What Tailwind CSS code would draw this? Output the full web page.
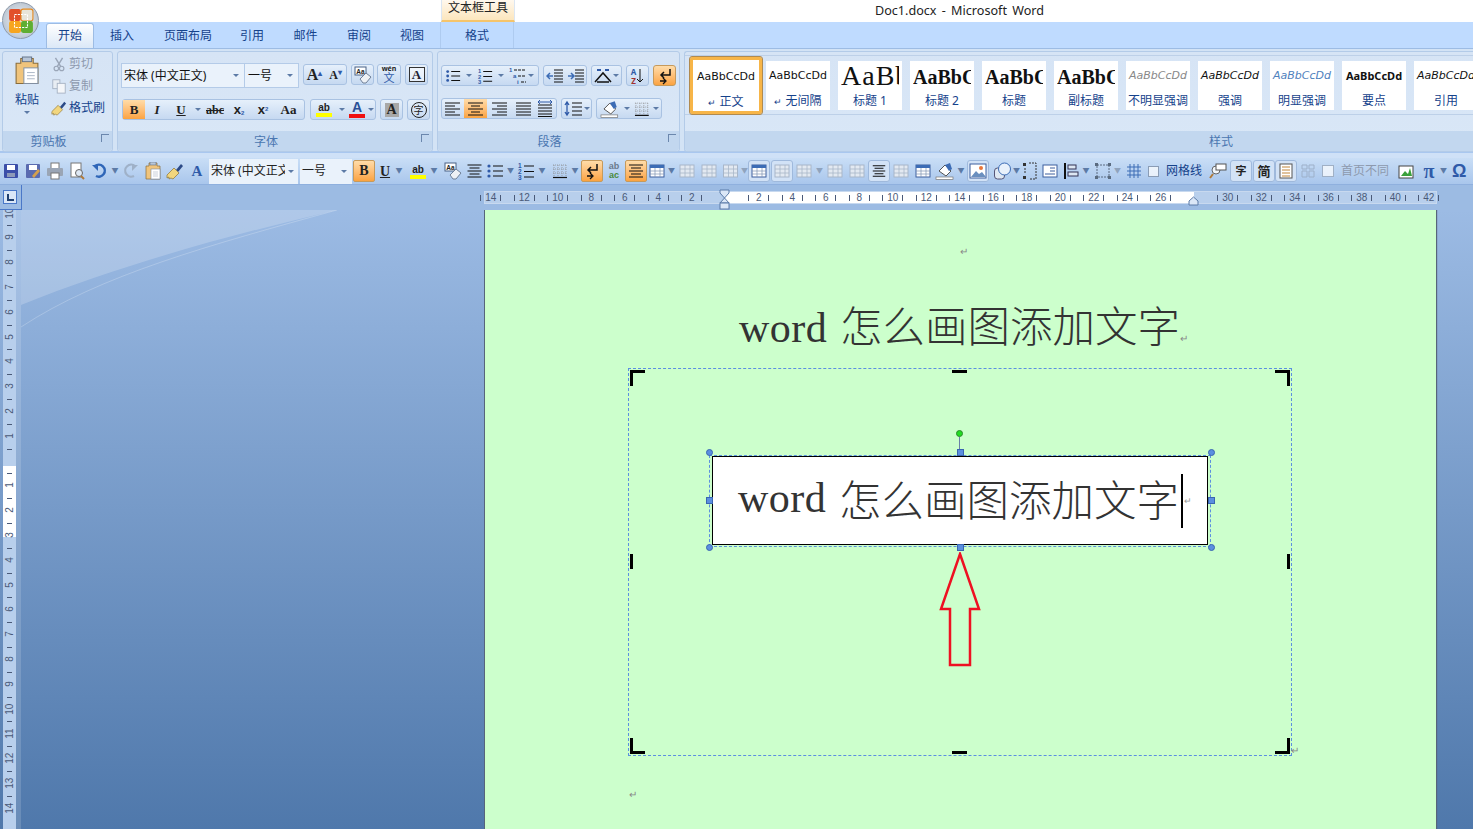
<!DOCTYPE html>
<html lang="zh"><head><meta charset="utf-8"><title>Doc1.docx - Microsoft Word</title>
<script src="https://cdn.jsdelivr.net/npm/@tailwindcss/browser@4"></script></head>
<body class="w-[1473px] h-[829px] overflow-hidden bg-white relative font-['Noto_Sans','Noto_Sans_CJK_SC',sans-serif] text-[12px] text-[#15428b]">
<svg class="hidden"><defs>
<symbol id="bul" viewBox="0 0 18 18"><g fill="#2f5aa8"><circle cx="3" cy="4" r="1.6"/><circle cx="3" cy="9" r="1.6"/><circle cx="3" cy="14" r="1.6"/></g><path d="M7 4h10M7 9h10M7 14h10" stroke="#111" stroke-width="1.2"/></symbol>
<symbol id="num" viewBox="0 0 18 18"><g fill="#2f5aa8" font-size="6.5" font-family="Liberation Sans" font-weight="700"><text x="1" y="6">1</text><text x="1" y="12">2</text><text x="1" y="18">3</text></g><path d="M7 4h10M7 9.500h10M7 15h10" stroke="#111" stroke-width="1.2"/></symbol>
<symbol id="multi" viewBox="0 0 18 18"><g fill="#2f5aa8" font-size="6" font-family="Liberation Sans" font-weight="700"><text x="0" y="5">1</text><text x="4" y="11">a</text><text x="8" y="17">i</text></g><path d="M5 3h12M9 9h8M12 15h5" stroke="#111" stroke-width="1.2" stroke-dasharray="3 1"/></symbol>
<symbol id="brush" viewBox="0 0 18 18"><path d="M10 8l5-6 2 2-5 6z" fill="#2c4a86"/><path d="M1 13l7-7 5 5-6 6-2-1-2 1 0-2-2 1z" fill="#f2d67e" stroke="#8b7233" stroke-width=".7"/></symbol>
<symbol id="erase" viewBox="0 0 18 18"><rect x="1" y="1" width="11" height="8" fill="#fff" stroke="#4a6285"/><text x="2.200" y="7.500" font-size="6.500" font-family="Liberation Sans" font-weight="700" fill="#222">Aa</text><path d="M6 13l6-6 5 4-5 6h-3z" fill="#eef1f5" stroke="#6f8098"/></symbol>
<symbol id="pil" viewBox="0 0 18 18"><path d="M5 1h8v3h3v13H2V4h3z" fill="#f0c47c" stroke="#8a6d3b" stroke-width=".7"/><rect x="6" y="0" width="6" height="3" fill="#b8c6d8" stroke="#5f6f86" stroke-width=".6"/><rect x="7" y="7" width="9" height="10" fill="#fff" stroke="#7c8da3" stroke-width=".6"/><path d="M9 10h5M9 12h5M9 14h5" stroke="#a8b4c4" stroke-width=".6"/></symbol>
<symbol id="ret" viewBox="0 0 18 18"><path d="M14 2v6H6M8 5L5 8l3 3" fill="none" stroke="#111" stroke-width="1.500"/><path d="M4 14h5M7 11l3 3-3 3" fill="none" stroke="#111" stroke-width="1.300"/></symbol>
<symbol id="center" viewBox="0 0 18 18"><path d="M2 3h14M4 6h10M2 9h14M4 12h10M2 15h14" stroke="#111" stroke-width="1.200"/></symbol>
<symbol id="table" viewBox="0 0 18 18"><rect x="2" y="3" width="14" height="12" fill="#fff" stroke="#3c5f9e"/><rect x="2" y="3" width="14" height="3" fill="#3c6cb5"/><path d="M2 9h14M2 12h14M7 6v9M12 6v9" stroke="#7e94b3" stroke-width=".7"/></symbol>
<symbol id="gray" viewBox="0 0 18 18"><rect x="2" y="3" width="14" height="12" fill="#e3e9f1" stroke="#a8b6c9"/><path d="M2 7h14M2 11h14M7 3v12M12 3v12" stroke="#a8b6c9" stroke-width=".8"/></symbol>
<symbol id="border" viewBox="0 0 18 18"><path d="M2 3h14M2 7h14M2 11h14M3 3v12M7 3v12M11 3v12M15 3v12" stroke="#888" stroke-width=".7" stroke-dasharray="1 1"/><path d="M2 15.500h14" stroke="#111" stroke-width="1.200"/></symbol>
<symbol id="pic" viewBox="0 0 18 18"><rect x="1" y="2" width="16" height="14" fill="#fff" stroke="#3c5f9e"/><path d="M2 15l5-6 3 3 3-2 4 5z" fill="#6a8fbf"/><circle cx="12" cy="6" r="2" fill="#e8763a"/></symbol>
</defs></svg>

<!-- title -->
<header class="relative h-[22px] bg-white">
  <div class="absolute left-[441px] top-0 w-[74px] h-[22px] bg-linear-to-b from-[#fff8ee] to-[#fce6bd] border-x border-[#dce6f2] border-b-2 border-b-[#f5c46b] text-center text-[#222] leading-[15px]">文本框工具</div>
  <div class="absolute left-[875px] top-[2px] text-[12.6px] leading-[18px] text-[#222] whitespace-pre [word-spacing:2px]">Doc1.docx - Microsoft Word</div>
</header>
<div class="absolute z-10 left-[2px] top-[2px] w-[37px] h-[37px] rounded-full bg-radial from-[#f4f6f8] to-[#a9b6c6] border border-[#8e9aaa] flex items-center justify-center">
  <svg width="26" height="26" viewBox="0 0 24 24"><rect x="1" y="1" width="11" height="11" rx="2" fill="#e2502a"/><rect x="12" y="1" width="11" height="11" rx="2" fill="#e8e4d8" stroke="#e58a1f"/><rect x="1" y="12" width="11" height="11" rx="2" fill="#f7a51e"/><rect x="12" y="12" width="11" height="11" rx="2" fill="#5fae32"/><rect x="6" y="6" width="12" height="12" fill="none" stroke="#fff" stroke-dasharray="2 1"/></svg>
</div>

<!-- tabs -->
<nav class="relative h-[26px] bg-[#bfdbff] flex items-end pl-[46px] leading-[24px]">
  <div class="w-[48px] h-[25px] bg-linear-to-b from-[#fff] to-[#dbe8f7] border border-b-0 border-[#9dbce4] rounded-t-[3px] text-center">开始</div>
  <div class="w-[56px] text-center">插入</div>
  <div class="w-[76px] text-center">页面布局</div>
  <div class="w-[52px] text-center">引用</div>
  <div class="w-[55px] text-center">邮件</div>
  <div class="w-[52px] text-center">审阅</div>
  <div class="w-[54px] text-center">视图</div>
  <div class="w-[74px] h-[26px] ml-[1px] leading-[27px] text-center border-x border-[#aecbf0]">格式</div>
</nav>

<!-- ribbon -->
<section class="h-[105px] bg-[#d3e3f5] border-t border-[#9dbce4] flex gap-[4px] pl-[2px] pt-[2px] border-b-2 border-b-[#a9c7ef]">
  <!-- clipboard -->
  <div class="w-[111px] h-[101px] border border-[#b3cbe8] rounded-[3px] bg-linear-to-b from-[#d6e4f5] to-[#d9e7f7] flex flex-col">
    <div class="h-[80px] flex pl-[8px] pt-[4px]">
      <div class="w-[32px] flex flex-col items-center">
        <svg class="w-[28px] h-[30px]"><use href="#pil"/></svg>
        <div class="mt-[5px] leading-[18px]">粘贴</div>
        <div class="mt-[2px] border-x-[3px] border-x-transparent border-t-[3px] border-t-[#5c7aa6]"></div>
      </div>
      <div class="ml-[8px] flex flex-col -mt-[1px] gap-[4px] leading-[18px]">
        <div class="flex items-center gap-[2px] text-[#8d99ad]"><svg class="w-[16px] h-[18px]" viewBox="0 0 18 18"><path d="M5 2l6 10M13 2L7 12" stroke="#9aa6b8" stroke-width="1.600"/><circle cx="6" cy="14" r="2.500" fill="none" stroke="#9aa6b8" stroke-width="1.300"/><circle cx="12" cy="14" r="2.500" fill="none" stroke="#9aa6b8" stroke-width="1.300"/></svg>剪切</div>
        <div class="flex items-center gap-[2px] text-[#8d99ad]"><svg class="w-[16px] h-[18px]" viewBox="0 0 18 18"><rect x="2" y="2" width="8" height="10" fill="#e8edf3" stroke="#a5b1c2"/><rect x="7" y="6" width="9" height="11" fill="#f4f6f9" stroke="#a5b1c2"/></svg>复制</div>
        <div class="flex items-center gap-[2px]"><svg class="w-[16px] h-[18px]"><use href="#brush"/></svg>格式刷</div>
      </div>
    </div>
    <div class="relative h-[20px] bg-[#c2d7ef] rounded-b-[3px] text-center pr-[18px] leading-[22px] text-[#4a76b0]">剪贴板<span class="absolute right-[3px] top-[3px] w-[8px] h-[8px] border-l border-t border-[#6b87ad]"></span></div>
  </div>
  <!-- font -->
  <div class="w-[316px] h-[101px] border border-[#b3cbe8] rounded-[3px] bg-linear-to-b from-[#d6e4f5] to-[#d9e7f7] flex flex-col">
    <div class="h-[80px] pl-[3px] pt-[11px] flex flex-col gap-[11px]">
      <div class="flex h-[25px]">
        <div class="w-[124px] h-[25px] bg-[#eaf2fb] border border-[#b4cbe8] flex items-center justify-between pl-[2px] pr-[5px] text-[#111]"><span>宋体 (中文正文)</span><i class="border-x-[3px] border-x-transparent border-t-[3px] border-t-[#5c7aa6]"></i></div>
        <div class="w-[54px] h-[25px] bg-[#eaf2fb] border border-l-0 border-[#b4cbe8] flex items-center justify-between pl-[3px] pr-[5px] text-[#111]"><span>一号</span><i class="border-x-[3px] border-x-transparent border-t-[3px] border-t-[#5c7aa6]"></i></div>
        <div class="ml-[4px] w-[44px] h-[21px] mt-[1px] border border-[#a9c2e2] rounded-[3px] bg-linear-to-b from-[#e6f0fb] to-[#c6d9f1] flex font-['Liberation_Serif'] font-bold text-[#222] items-center"><span class="w-[22px] text-[16px] text-center leading-none">A<sup class="text-[#2f5aa8] text-[8px]">▴</sup></span><span class="w-[22px] text-[12px] text-center leading-none">A<sup class="text-[#2f5aa8] text-[8px]">▾</sup></span></div>
        <div class="ml-[4px] w-[23px] h-[21px] mt-[1px] border border-[#a9c2e2] rounded-[3px] bg-linear-to-b from-[#e6f0fb] to-[#c6d9f1] flex items-center justify-center"><svg class="w-[18px] h-[18px]"><use href="#erase"/></svg></div>
        <div class="ml-[3px] w-[24px] h-[21px] mt-[1px] border border-[#a9c2e2] rounded-[3px] bg-linear-to-b from-[#e6f0fb] to-[#c6d9f1] flex flex-col items-center text-[#222]"><span class="text-[7px] leading-[7px] font-bold">wén</span><span class="text-[11px] text-[#2f5aa8] leading-[12px]">文</span></div>
        <div class="ml-[4px] w-[23px] h-[21px] mt-[1px] border border-[#a9c2e2] rounded-[3px] bg-linear-to-b from-[#e6f0fb] to-[#c6d9f1] flex items-center justify-center"><span class="border border-[#333] w-[16px] h-[15px] bg-white/50 text-center text-[13px] leading-[14px] font-['Liberation_Serif'] font-bold text-[#223]">A</span></div>
      </div>
      <div class="flex h-[21px] ml-[1px] font-['Liberation_Serif'] text-[#222]">
        <div class="w-[183px] h-[21px] border border-[#a9c2e2] rounded-[3px] bg-linear-to-b from-[#e6f0fb] to-[#c6d9f1] flex items-center text-center">
          <span class="w-[22px] h-[19px] bg-linear-to-b from-[#ffdca8] to-[#fba33f] font-bold text-[13px] leading-[19px]">B</span>
          <span class="w-[24px] italic font-bold text-[13px]">I</span>
          <span class="w-[24px] font-bold text-[13px] underline">U</span><i class="w-[10px] flex justify-center"><i class="border-x-[3px] border-x-transparent border-t-[3px] border-t-[#5c7aa6]"></i></i>
          <span class="w-[24px] text-[12px] font-bold line-through">abc</span>
          <span class="w-[24px] text-[13px] font-bold font-['Liberation_Sans']">x<sub class="text-[6px] text-[#2f5aa8]">2</sub></span>
          <span class="w-[24px] text-[13px] font-bold font-['Liberation_Sans']">x<sup class="text-[6px] text-[#2f5aa8]">2</sup></span>
          <span class="w-[27px] text-[13px] font-bold whitespace-nowrap">Aa</span>
        </div>
        <div class="ml-[5px] w-[66px] h-[21px] border border-[#a9c2e2] rounded-[3px] bg-linear-to-b from-[#e6f0fb] to-[#c6d9f1] flex items-center">
          <span class="w-[26px] flex flex-col items-center font-['Liberation_Sans'] text-[10px] leading-[11px] font-bold">ab<i class="w-[16px] h-[4px] bg-[#ffff00]"></i></span><i class="w-[10px] flex justify-center"><i class="border-x-[3px] border-x-transparent border-t-[3px] border-t-[#5c7aa6]"></i></i>
          <span class="w-[20px] flex flex-col items-center font-['Liberation_Sans'] text-[14px] leading-[13px] font-bold text-[#2a4f96]">A<i class="w-[16px] h-[4px] bg-[#f01010]"></i></span><i class="w-[8px] flex justify-center"><i class="border-x-[3px] border-x-transparent border-t-[3px] border-t-[#5c7aa6]"></i></i>
        </div>
        <div class="ml-[4px] w-[23px] h-[21px] border border-[#a9c2e2] rounded-[3px] bg-linear-to-b from-[#e6f0fb] to-[#c6d9f1] flex items-center justify-center"><span class="w-[14px] h-[14px] bg-[#a8a8a8] text-center text-[14px] leading-[14px] font-bold">A</span></div>
        <div class="ml-[4px] w-[23px] h-[21px] border border-[#a9c2e2] rounded-[3px] bg-linear-to-b from-[#e6f0fb] to-[#c6d9f1] flex items-center justify-center"><span class="w-[16px] h-[16px] rounded-full border border-[#222] text-center text-[10px] leading-[14px] font-['Noto_Sans_CJK_SC']">字</span></div>
      </div>
    </div>
    <div class="relative h-[20px] bg-[#c2d7ef] rounded-b-[3px] text-center pr-[18px] leading-[22px] text-[#4a76b0]">字体<span class="absolute right-[3px] top-[3px] w-[8px] h-[8px] border-l border-t border-[#6b87ad]"></span></div>
  </div>
  <!-- paragraph -->
  <div class="w-[243px] h-[101px] border border-[#b3cbe8] rounded-[3px] bg-linear-to-b from-[#d6e4f5] to-[#d9e7f7] flex flex-col">
    <div class="h-[80px] pl-[3px] pt-[13px] flex flex-col gap-[12px]">
      <div class="flex h-[21px] gap-[4px]">
        <div class="w-[98px] border border-[#a9c2e2] rounded-[3px] bg-linear-to-b from-[#e6f0fb] to-[#c6d9f1] flex items-center pl-[3px]">
          <svg class="w-[16px] h-[16px]"><use href="#bul"/></svg><i class="w-[16px] flex justify-center"><i class="border-x-[3px] border-x-transparent border-t-[3px] border-t-[#5c7aa6]"></i></i>
          <svg class="w-[16px] h-[16px]"><use href="#num"/></svg><i class="w-[16px] flex justify-center"><i class="border-x-[3px] border-x-transparent border-t-[3px] border-t-[#5c7aa6]"></i></i>
          <svg class="w-[18px] h-[18px]"><use href="#multi"/></svg><i class="w-[8px] flex justify-center"><i class="border-x-[3px] border-x-transparent border-t-[3px] border-t-[#5c7aa6]"></i></i>
        </div>
        <div class="w-[44px] border border-[#a9c2e2] rounded-[3px] bg-linear-to-b from-[#e6f0fb] to-[#c6d9f1] flex items-center justify-around">
          <svg class="w-[18px] h-[16px]" viewBox="0 0 18 16"><path d="M8 2h9M8 5h9M8 8h9M8 11h9M8 14h9" stroke="#111"/><path d="M7 8H1M4 5L1 8l3 3" fill="none" stroke="#3c6cb5" stroke-width="1.500"/></svg>
          <svg class="w-[18px] h-[16px]" viewBox="0 0 18 16"><path d="M8 2h9M8 5h9M8 8h9M8 11h9M8 14h9" stroke="#111"/><path d="M1 8h6M4 5l3 3-3 3" fill="none" stroke="#3c6cb5" stroke-width="1.500"/></svg>
        </div>
        <div class="w-[31px] border border-[#a9c2e2] rounded-[3px] bg-linear-to-b from-[#e6f0fb] to-[#c6d9f1] flex items-center pl-[2px]"><svg class="w-[18px] h-[16px]" viewBox="0 0 18 16"><path d="M1 14L9 5l8 9M3 14h12" fill="none" stroke="#111" stroke-width="1.500"/><path d="M3 2h4M11 2h4" stroke="#2f5aa8" stroke-width="2"/></svg><i class="w-[8px] flex justify-center"><i class="border-x-[3px] border-x-transparent border-t-[3px] border-t-[#5c7aa6]"></i></i></div>
        <div class="w-[23px] border border-[#a9c2e2] rounded-[3px] bg-linear-to-b from-[#e6f0fb] to-[#c6d9f1] flex items-center justify-center font-bold text-[8px]"><span class="flex flex-col items-center leading-[9px] text-[#2f5aa8]">A<span class="text-[#a03030]">Z</span></span><svg class="w-[8px] h-[16px]" viewBox="0 0 8 16"><path d="M4 1v13M1 11l3 3 3-3" fill="none" stroke="#111"/></svg></div>
        <div class="w-[23px] border border-[#c69a5c] rounded-[3px] bg-linear-to-b from-[#ffdca8] to-[#fba33f] flex items-center justify-center"><svg class="w-[18px] h-[18px]"><use href="#ret"/></svg></div>
      </div>
      <div class="flex h-[21px] gap-[4px]">
        <div class="w-[116px] border border-[#a9c2e2] rounded-[3px] bg-linear-to-b from-[#e6f0fb] to-[#c6d9f1] flex items-center">
          <svg class="w-[22px] h-[19px]" viewBox="0 0 22 19"><path d="M3 4h15M3 7h10M3 10h15M3 13h10M3 16h15" stroke="#111"/></svg>
          <svg class="w-[23px] h-[19px] bg-linear-to-b from-[#ffdca8] to-[#fba33f]" viewBox="0 0 23 19"><path d="M4 4h15M7 7h9M4 10h15M7 13h9M4 16h15" stroke="#111"/></svg>
          <svg class="w-[24px] h-[19px]" viewBox="0 0 24 19"><path d="M5 4h15M10 7h10M5 10h15M10 13h10M5 16h15" stroke="#111"/></svg>
          <svg class="w-[24px] h-[19px]" viewBox="0 0 24 19"><path d="M5 4h15M5 7h15M5 10h15M5 13h15M5 16h15" stroke="#111"/></svg>
          <svg class="w-[20px] h-[19px]" viewBox="0 0 20 19"><path d="M3 6h14M3 9h14M3 12h14M3 15h14M3 17.500h14" stroke="#111"/><path d="M3 3h14M5 1L3 3l2 2M15 1l2 2-2 2" fill="none" stroke="#2f5aa8"/></svg>
        </div>
        <div class="w-[31px] border border-[#a9c2e2] rounded-[3px] bg-linear-to-b from-[#e6f0fb] to-[#c6d9f1] flex items-center pl-[1px]"><svg class="w-[20px] h-[19px]" viewBox="0 0 20 19"><path d="M9 4h10M9 8h10M9 12h10M9 16h10" stroke="#111"/><path d="M4 3v13M2 6l2-3 2 3M2 13l2 3 2-3" fill="none" stroke="#2f5aa8" stroke-width="1.300"/></svg><i class="w-[8px] flex justify-center"><i class="border-x-[3px] border-x-transparent border-t-[3px] border-t-[#5c7aa6]"></i></i></div>
        <div class="w-[66px] border border-[#a9c2e2] rounded-[3px] bg-linear-to-b from-[#e6f0fb] to-[#c6d9f1] flex items-center pl-[3px]"><svg class="w-[20px] h-[18px]" viewBox="0 0 20 18"><path d="M4 9l6-6 6 6-5 5z" fill="#fff" stroke="#555"/><path d="M10 3l5-2 2 6-3 2z" fill="#3c6cb5"/><rect x="1" y="15" width="17" height="2.500" fill="#fff" stroke="#777" stroke-width=".7"/></svg><i class="w-[14px] flex justify-center"><i class="border-x-[3px] border-x-transparent border-t-[3px] border-t-[#5c7aa6]"></i></i><svg class="w-[18px] h-[18px]"><use href="#border"/></svg><i class="w-[10px] flex justify-center"><i class="border-x-[3px] border-x-transparent border-t-[3px] border-t-[#5c7aa6]"></i></i></div>
      </div>
    </div>
    <div class="relative h-[20px] bg-[#c2d7ef] rounded-b-[3px] text-center pr-[18px] leading-[22px] text-[#4a76b0]">段落<span class="absolute right-[3px] top-[3px] w-[8px] h-[8px] border-l border-t border-[#6b87ad]"></span></div>
  </div>
  <!-- styles -->
  <div class="flex-1 min-w-0 h-[101px] border border-[#b3cbe8] border-r-0 rounded-l-[3px] bg-linear-to-b from-[#d6e4f5] to-[#d9e7f7] flex flex-col overflow-hidden">
    <div class="h-[80px] pt-[4px]">
      <div class="h-[60px] border-y border-[#bdd0e8] flex gap-[8px] pl-[5px] items-center text-center text-[12px] text-[#15428b] -mt-[1px]">
        <div class="w-[72px] h-[57px] shrink-0 -mr-[4px] border-[3px] border-[#f7b548] rounded-[2px] bg-white flex flex-col outline outline-[#b08a50]"><div class="h-[31px] leading-[34px] text-[11px] font-['DejaVu_Sans'] text-[#111]">AaBbCcDd</div><div class="leading-[22px]"><span class="text-[9px]">↵</span> 正文</div></div>
        <div class="w-[64px] h-[49px] shrink-0 bg-white overflow-hidden"><div class="h-[30px] leading-[30px] text-[11px] font-['DejaVu_Sans'] text-[#111]">AaBbCcDd</div><div class="leading-[20px]"><span class="text-[9px]">↵</span> 无间隔</div></div>
        <div class="w-[64px] h-[49px] shrink-0 bg-white overflow-hidden"><div class="h-[30px] ml-[3px] w-[58px] leading-[30px] text-left whitespace-nowrap overflow-hidden text-[28px] font-['Liberation_Serif'] tracking-[1px] text-[#111]">AaBb</div><div class="leading-[20px]">标题 1</div></div>
        <div class="w-[64px] h-[49px] shrink-0 bg-white overflow-hidden"><div class="h-[30px] ml-[3px] w-[58px] leading-[32px] text-left whitespace-nowrap overflow-hidden text-[20px] font-bold font-['Liberation_Serif'] text-[#111]">AaBbC</div><div class="leading-[20px]">标题 2</div></div>
        <div class="w-[64px] h-[49px] shrink-0 bg-white overflow-hidden"><div class="h-[30px] ml-[3px] w-[58px] leading-[32px] text-left whitespace-nowrap overflow-hidden text-[20px] font-bold font-['Liberation_Serif'] text-[#111]">AaBbC</div><div class="leading-[20px]">标题</div></div>
        <div class="w-[64px] h-[49px] shrink-0 bg-white overflow-hidden"><div class="h-[30px] ml-[3px] w-[58px] leading-[32px] text-left whitespace-nowrap overflow-hidden text-[20px] font-bold font-['Liberation_Serif'] text-[#111]">AaBbC</div><div class="leading-[20px]">副标题</div></div>
        <div class="w-[64px] h-[49px] shrink-0 bg-white overflow-hidden"><div class="h-[30px] leading-[30px] text-[11px] italic font-['DejaVu_Sans'] text-[#888]">AaBbCcDd</div><div class="leading-[20px] whitespace-nowrap">不明显强调</div></div>
        <div class="w-[64px] h-[49px] shrink-0 bg-white overflow-hidden"><div class="h-[30px] leading-[30px] text-[11px] italic font-['DejaVu_Sans'] text-[#111]">AaBbCcDd</div><div class="leading-[20px]">强调</div></div>
        <div class="w-[64px] h-[49px] shrink-0 bg-white overflow-hidden"><div class="h-[30px] leading-[30px] text-[11px] italic font-['DejaVu_Sans'] text-[#4f81bd]">AaBbCcDd</div><div class="leading-[20px]">明显强调</div></div>
        <div class="w-[64px] h-[49px] shrink-0 bg-white overflow-hidden"><div class="h-[30px] leading-[30px] text-[11px] font-bold font-['Noto_Sans'] text-[#111]">AaBbCcDd</div><div class="leading-[20px]">要点</div></div>
        <div class="w-[64px] h-[49px] shrink-0 bg-white overflow-hidden"><div class="h-[30px] leading-[30px] text-[11px] italic font-['DejaVu_Sans'] text-[#111] whitespace-nowrap">AaBbCcDd</div><div class="leading-[20px]">引用</div></div>
      </div>
    </div>
    <div class="h-[20px] bg-[#c2d7ef] pl-[524px] leading-[22px] text-[#4a76b0]">样式</div>
  </div>
</section>

<!-- quick toolbar -->
<div class="h-[5px] bg-[#cfe1f7]"></div>
<div class="h-[27px] bg-linear-to-b from-[#c9def6] to-[#a9c6ec] border-b border-[#8fb0de] flex items-center text-[#222] overflow-hidden [&>*]:shrink-0">
  <svg class="w-[22px] h-[18px]" viewBox="0 0 18 18"><rect x="2" y="2" width="14" height="14" rx="1" fill="#3c4fa8"/><rect x="5" y="3" width="8" height="5" fill="#fff"/><rect x="5" y="11" width="8" height="4" fill="#8e9ab8"/></svg>
  <svg class="w-[22px] h-[18px]" viewBox="0 0 18 18"><rect x="2" y="2" width="14" height="14" rx="1" fill="#5a6bb0"/><rect x="5" y="3" width="8" height="5" fill="#fff"/><path d="M8 14l6-7 2 2-6 7z" fill="#d4a04c"/></svg>
  <svg class="w-[22px] h-[18px]" viewBox="0 0 18 18"><rect x="5" y="1" width="8" height="6" fill="#fff" stroke="#777"/><rect x="1" y="6" width="16" height="8" rx="1" fill="#9aa5b5"/><rect x="5" y="11" width="8" height="6" fill="#fff" stroke="#777"/></svg>
  <svg class="w-[22px] h-[18px]" viewBox="0 0 18 18"><rect x="3" y="1" width="10" height="14" fill="#fff" stroke="#777"/><circle cx="11" cy="11" r="3.500" fill="#dfe9f5" stroke="#666"/><path d="M13 14l3 3" stroke="#b07a3a" stroke-width="2"/></svg>
  <svg class="w-[22px] h-[18px]" viewBox="0 0 18 18"><path d="M5 4a6 6 0 1 1 1 10" fill="none" stroke="#2f66b8" stroke-width="2.500"/><path d="M2 3h6v6z" fill="#2f66b8"/></svg>
  <span class="w-[10px] text-center text-[#5c7aa6] text-[7px]">▼</span>
  <svg class="w-[22px] h-[18px]" viewBox="0 0 18 18"><path d="M13 4a6 6 0 1 0-1 10" fill="none" stroke="#9fb1c8" stroke-width="2.200"/><path d="M16 3h-6v6z" fill="#9fb1c8"/></svg>
  <svg class="w-[22px] h-[18px]"><use href="#pil"/></svg>
  <svg class="w-[22px] h-[18px]"><use href="#brush"/></svg>
  <span class="w-[22px] text-center text-[15px] font-bold font-['Liberation_Serif'] text-[#2f5aa8]">A</span>
  <div class="ml-[1px] w-[89px] h-[25px] bg-[#eaf2fb] flex items-center justify-between pl-[2px] pr-[4px]"><span class="w-[74px] overflow-hidden whitespace-nowrap">宋体 (中文正文)</span><i class="border-x-[3px] border-x-transparent border-t-[3px] border-t-[#5c7aa6]"></i></div>
  <div class="ml-[2px] w-[52px] h-[25px] bg-[#eaf2fb] flex items-center justify-between pl-[2px] pr-[5px]"><span>一号</span><i class="border-x-[3px] border-x-transparent border-t-[3px] border-t-[#5c7aa6]"></i></div>
  <span class="ml-[1px] w-[22px] h-[22px] rounded-[2px] border border-[#c69a5c] bg-linear-to-b from-[#ffdca8] to-[#fba33f] text-center font-bold text-[14px] leading-[20px] font-['Liberation_Serif']">B</span>
  <span class="w-[20px] text-center font-bold text-[14px] underline font-['Liberation_Serif']">U</span>
  <span class="w-[8px] text-center text-[#5c7aa6] text-[7px]">▼</span>
  <span class="ml-[5px] w-[20px] flex flex-col items-center font-['Liberation_Sans'] text-[10px] leading-[11px] font-bold">ab<i class="w-[16px] h-[4px] bg-[#ffff00]"></i></span>
  <span class="w-[12px] text-center text-[#5c7aa6] text-[7px]">▼</span>
  <svg class="ml-[2px] w-[22px] h-[18px]"><use href="#erase"/></svg>
  <svg class="w-[21px] h-[18px]"><use href="#center"/></svg>
  <svg class="w-[20px] h-[18px]"><use href="#bul"/></svg><span class="w-[11px] text-center text-[#5c7aa6] text-[7px]">▼</span>
  <svg class="w-[20px] h-[18px]"><use href="#num"/></svg><span class="w-[12px] text-center text-[#5c7aa6] text-[7px]">▼</span>
  <svg class="ml-[2px] w-[20px] h-[18px]"><use href="#border"/></svg><span class="w-[10px] text-center text-[#5c7aa6] text-[7px]">▼</span>
  <span class="ml-[1px] w-[22px] h-[22px] rounded-[2px] border border-[#c69a5c] bg-linear-to-b from-[#ffdca8] to-[#fba33f] flex items-center justify-center"><svg class="w-[18px] h-[18px]"><use href="#ret"/></svg></span>
  <span class="w-[22px] flex flex-col items-center text-[9px] leading-[9px] font-['Liberation_Sans'] font-bold text-[#6b7a8c]">ab<span class="text-[#4a8a3a]">ac</span></span>
  <span class="w-[22px] h-[22px] rounded-[2px] border border-[#c69a5c] bg-linear-to-b from-[#ffdca8] to-[#fba33f] flex items-center justify-center"><svg class="w-[18px] h-[18px]"><use href="#center"/></svg></span>
  <svg class="w-[20px] h-[18px]"><use href="#table"/></svg><span class="w-[9px] text-center text-[#5c7aa6] text-[7px]">▼</span>
  <svg class="w-[22px] h-[18px]"><use href="#gray"/></svg>
  <svg class="w-[22px] h-[18px]"><use href="#gray"/></svg>
  <svg class="w-[21px] h-[18px]"><use href="#gray"/></svg><span class="w-[7px] text-center text-[#8fa3bd] text-[7px]">▼</span>
  <span class="w-[22px] h-[22px] rounded-[3px] border border-[#9fb9dc] bg-[#d2e2f6] flex items-center justify-center"><svg class="w-[18px] h-[18px]"><use href="#table"/></svg></span>
  <span class="ml-[1px] w-[22px] h-[22px] rounded-[3px] border border-[#9fb9dc] bg-[#d2e2f6] flex items-center justify-center"><svg class="w-[18px] h-[18px]"><use href="#gray"/></svg></span>
  <svg class="w-[22px] h-[18px]"><use href="#gray"/></svg><span class="w-[9px] text-center text-[#8fa3bd] text-[7px]">▼</span>
  <svg class="w-[22px] h-[18px]"><use href="#gray"/></svg>
  <svg class="w-[22px] h-[18px]"><use href="#gray"/></svg>
  <span class="w-[22px] h-[22px] rounded-[3px] border border-[#9fb9dc] bg-[#d2e2f6] flex items-center justify-center"><svg class="w-[16px] h-[16px]"><use href="#center"/></svg></span>
  <svg class="w-[22px] h-[18px]"><use href="#gray"/></svg>
  <svg class="w-[22px] h-[18px]"><use href="#table"/></svg>
  <svg class="w-[22px] h-[18px]" viewBox="0 0 20 18"><path d="M4 9l6-6 6 6-5 5z" fill="#fff" stroke="#555"/><path d="M10 3l5-2 2 6-3 2z" fill="#3c6cb5"/><rect x="1" y="15" width="17" height="2.500" fill="#fff" stroke="#777" stroke-width=".7"/></svg><span class="w-[10px] text-center text-[#5c7aa6] text-[7px]">▼</span>
  <span class="ml-[1px] w-[22px] h-[22px] rounded-[3px] border border-[#9fb9dc] bg-[#d2e2f6] flex items-center justify-center"><svg class="w-[18px] h-[18px]"><use href="#pic"/></svg></span>
  <svg class="ml-[3px] w-[21px] h-[18px]" viewBox="0 0 18 18"><rect x="1" y="6" width="10" height="11" rx="3" fill="#dfe8f3" stroke="#557"/><circle cx="11" cy="7" r="6" fill="#e9f1fb" stroke="#3c6cb5"/></svg><span class="w-[6px] text-center text-[#5c7aa6] text-[7px]">▼</span>
  <svg class="w-[20px] h-[18px]" viewBox="0 0 18 18"><path d="M9 1h7v16H9M5 6v6" fill="none" stroke="#333" stroke-dasharray="2 1"/><rect x="3" y="1" width="3" height="3" fill="#333"/><rect x="3" y="14" width="3" height="3" fill="#333"/></svg>
  <svg class="w-[22px] h-[18px]" viewBox="0 0 18 18"><rect x="2" y="3" width="14" height="12" fill="#fff" stroke="#3c5f9e"/><path d="M9 6h5M9 9h5M4 12h10" stroke="#3c5f9e"/></svg>
  <svg class="w-[20px] h-[18px]" viewBox="0 0 18 18"><path d="M3 1v16" stroke="#111" stroke-width="2"/><rect x="6" y="3" width="8" height="4" fill="#dde7f3" stroke="#335"/><rect x="6" y="10" width="10" height="4" fill="#dde7f3" stroke="#335"/></svg><span class="w-[10px] text-center text-[#5c7aa6] text-[7px]">▼</span>
  <svg class="ml-[1px] w-[22px] h-[18px]" viewBox="0 0 18 18"><rect x="3" y="3" width="12" height="12" fill="none" stroke="#5a6b80" stroke-dasharray="2 1"/><rect x="1" y="1" width="3" height="3" fill="#5a6b80"/><rect x="14" y="14" width="3" height="3" fill="#5a6b80"/><rect x="1" y="14" width="3" height="3" fill="#5a6b80"/><rect x="14" y="1" width="3" height="3" fill="#5a6b80"/></svg><span class="w-[7px] text-center text-[#8fa3bd] text-[7px]">▼</span>
  <svg class="ml-[3px] w-[20px] h-[18px]" viewBox="0 0 18 18"><path d="M2 5h14M2 9h14M2 13h14M5 2v14M9 2v14M13 2v14" stroke="#3c6cb5"/></svg>
  <span class="ml-[4px] w-[11px] h-[11px] bg-white/70 border border-[#8a9cb5]"></span>
  <span class="ml-[7px] w-[37px] text-[#15428b] whitespace-nowrap">网格线</span>
  <svg class="ml-[5px] w-[20px] h-[18px]" viewBox="0 0 18 18"><circle cx="7" cy="8" r="4" fill="#f3f6fa" stroke="#666"/><rect x="7" y="2" width="10" height="6" fill="#fff" stroke="#555"/><path d="M4 12l-3 4" stroke="#b07a3a" stroke-width="2"/></svg>
  <span class="ml-[2px] w-[22px] h-[22px] rounded-[3px] border border-[#9fb9dc] bg-[#d2e2f6] flex items-center justify-center text-[11px] font-bold text-[#222]">字</span>
  <span class="ml-[1px] w-[22px] h-[22px] rounded-[3px] border border-[#9fb9dc] bg-[#d2e2f6] text-center text-[13px] leading-[20px] font-bold text-[#222]">简</span>
  <span class="w-[22px] h-[22px] rounded-[3px] border border-[#9fb9dc] bg-[#d2e2f6] flex items-center justify-center"><svg class="w-[14px] h-[16px]" viewBox="0 0 14 16"><rect x="1" y="1" width="12" height="14" fill="#fff" stroke="#555"/><path d="M3 4h8M3 7h8M3 10h8M3 13h8" stroke="#c0853a"/></svg></span>
  <svg class="ml-[1px] w-[20px] h-[18px]" viewBox="0 0 18 18"><path d="M3 3h5v4H3zM10 3h5v4h-5zM3 9h5v6H3zM10 9h5v6h-5z" fill="none" stroke="#9db0c9"/></svg>
  <span class="ml-[4px] w-[12px] h-[12px] bg-white/70 border border-[#a0b0c5]"></span>
  <span class="ml-[7px] w-[48px] whitespace-nowrap text-[#8d99ad]">首页不同</span>
  <svg class="ml-[7px] w-[20px] h-[18px]" viewBox="0 0 18 18"><rect x="2" y="4" width="14" height="12" fill="#fff" stroke="#444"/><path d="M4 14l4-5 3 3 2-6 2 8z" fill="#3aa03a"/></svg>
  <span class="ml-[3px] w-[20px] text-center text-[20px] leading-none font-bold font-['Liberation_Serif'] text-[#2f5aa8]">π</span><span class="w-[9px] text-center text-[#5c7aa6] text-[7px]">▼</span>
  <span class="ml-[4px] w-[22px] text-[18px] leading-none font-bold font-['Liberation_Sans'] text-[#2f5aa8]">Ω</span>
</div>

<!-- horizontal ruler row -->
<div class="h-[25px] bg-[#9cbbe3] flex items-start relative">
  <div class="w-[22px] h-[25px] border-r border-b border-[#4a78c8] pl-[3px] pt-[5px]"><div class="w-[14px] h-[14px] border border-[#4a78c8] bg-[#dbe7f7] flex items-end justify-center pb-[2px]"><span class="w-[7px] h-[7px] border-l-2 border-b-2 border-[#1f3f70]"></span></div></div>
  <div class="absolute left-[484px] top-[6px] w-[953px] h-[13px] bg-[#b8cfec] border border-[#c8d9ef] flex items-center text-[10px] leading-none font-['Liberation_Sans'] text-[#4a5a78]">
    <div class="absolute left-[240px] top-0 w-[469px] h-[11px] bg-white"></div>
    <div class="relative flex -ml-[11px]">
      <span class="w-[33.5px] flex justify-center gap-[3px] items-center"><i class="w-px h-[6px] bg-[#4a5a78]"></i><span class="w-[13px] text-center">14</span><i class="w-px h-[6px] bg-[#4a5a78]"></i></span>
      <span class="w-[33.5px] flex justify-center gap-[3px] items-center"><i class="w-px h-[6px] bg-[#4a5a78]"></i><span class="w-[13px] text-center">12</span><i class="w-px h-[6px] bg-[#4a5a78]"></i></span>
      <span class="w-[33.5px] flex justify-center gap-[3px] items-center"><i class="w-px h-[6px] bg-[#4a5a78]"></i><span class="w-[13px] text-center">10</span><i class="w-px h-[6px] bg-[#4a5a78]"></i></span>
      <span class="w-[33.5px] flex justify-center gap-[3px] items-center"><i class="w-px h-[6px] bg-[#4a5a78]"></i><span class="w-[13px] text-center">8</span><i class="w-px h-[6px] bg-[#4a5a78]"></i></span>
      <span class="w-[33.5px] flex justify-center gap-[3px] items-center"><i class="w-px h-[6px] bg-[#4a5a78]"></i><span class="w-[13px] text-center">6</span><i class="w-px h-[6px] bg-[#4a5a78]"></i></span>
      <span class="w-[33.5px] flex justify-center gap-[3px] items-center"><i class="w-px h-[6px] bg-[#4a5a78]"></i><span class="w-[13px] text-center">4</span><i class="w-px h-[6px] bg-[#4a5a78]"></i></span>
      <span class="w-[33.5px] flex justify-center gap-[3px] items-center"><i class="w-px h-[6px] bg-[#4a5a78]"></i><span class="w-[13px] text-center">2</span><i class="w-px h-[6px] bg-[#4a5a78]"></i></span>
      <span class="w-[33.5px]"></span>
      <span class="w-[33.5px] flex justify-center gap-[3px] items-center"><i class="w-px h-[6px] bg-[#4a5a78]"></i><span class="w-[13px] text-center">2</span><i class="w-px h-[6px] bg-[#4a5a78]"></i></span>
      <span class="w-[33.5px] flex justify-center gap-[3px] items-center"><i class="w-px h-[6px] bg-[#4a5a78]"></i><span class="w-[13px] text-center">4</span><i class="w-px h-[6px] bg-[#4a5a78]"></i></span>
      <span class="w-[33.5px] flex justify-center gap-[3px] items-center"><i class="w-px h-[6px] bg-[#4a5a78]"></i><span class="w-[13px] text-center">6</span><i class="w-px h-[6px] bg-[#4a5a78]"></i></span>
      <span class="w-[33.5px] flex justify-center gap-[3px] items-center"><i class="w-px h-[6px] bg-[#4a5a78]"></i><span class="w-[13px] text-center">8</span><i class="w-px h-[6px] bg-[#4a5a78]"></i></span>
      <span class="w-[33.5px] flex justify-center gap-[3px] items-center"><i class="w-px h-[6px] bg-[#4a5a78]"></i><span class="w-[13px] text-center">10</span><i class="w-px h-[6px] bg-[#4a5a78]"></i></span>
      <span class="w-[33.5px] flex justify-center gap-[3px] items-center"><i class="w-px h-[6px] bg-[#4a5a78]"></i><span class="w-[13px] text-center">12</span><i class="w-px h-[6px] bg-[#4a5a78]"></i></span>
      <span class="w-[33.5px] flex justify-center gap-[3px] items-center"><i class="w-px h-[6px] bg-[#4a5a78]"></i><span class="w-[13px] text-center">14</span><i class="w-px h-[6px] bg-[#4a5a78]"></i></span>
      <span class="w-[33.5px] flex justify-center gap-[3px] items-center"><i class="w-px h-[6px] bg-[#4a5a78]"></i><span class="w-[13px] text-center">16</span><i class="w-px h-[6px] bg-[#4a5a78]"></i></span>
      <span class="w-[33.5px] flex justify-center gap-[3px] items-center"><i class="w-px h-[6px] bg-[#4a5a78]"></i><span class="w-[13px] text-center">18</span><i class="w-px h-[6px] bg-[#4a5a78]"></i></span>
      <span class="w-[33.5px] flex justify-center gap-[3px] items-center"><i class="w-px h-[6px] bg-[#4a5a78]"></i><span class="w-[13px] text-center">20</span><i class="w-px h-[6px] bg-[#4a5a78]"></i></span>
      <span class="w-[33.5px] flex justify-center gap-[3px] items-center"><i class="w-px h-[6px] bg-[#4a5a78]"></i><span class="w-[13px] text-center">22</span><i class="w-px h-[6px] bg-[#4a5a78]"></i></span>
      <span class="w-[33.5px] flex justify-center gap-[3px] items-center"><i class="w-px h-[6px] bg-[#4a5a78]"></i><span class="w-[13px] text-center">24</span><i class="w-px h-[6px] bg-[#4a5a78]"></i></span>
      <span class="w-[33.5px] flex justify-center gap-[3px] items-center"><i class="w-px h-[6px] bg-[#4a5a78]"></i><span class="w-[13px] text-center">26</span><i class="w-px h-[6px] bg-[#4a5a78]"></i></span>
      <span class="w-[33.5px]"></span>
      <span class="w-[33.5px] flex justify-center gap-[3px] items-center"><i class="w-px h-[6px] bg-[#4a5a78]"></i><span class="w-[13px] text-center">30</span><i class="w-px h-[6px] bg-[#4a5a78]"></i></span>
      <span class="w-[33.5px] flex justify-center gap-[3px] items-center"><i class="w-px h-[6px] bg-[#4a5a78]"></i><span class="w-[13px] text-center">32</span><i class="w-px h-[6px] bg-[#4a5a78]"></i></span>
      <span class="w-[33.5px] flex justify-center gap-[3px] items-center"><i class="w-px h-[6px] bg-[#4a5a78]"></i><span class="w-[13px] text-center">34</span><i class="w-px h-[6px] bg-[#4a5a78]"></i></span>
      <span class="w-[33.5px] flex justify-center gap-[3px] items-center"><i class="w-px h-[6px] bg-[#4a5a78]"></i><span class="w-[13px] text-center">36</span><i class="w-px h-[6px] bg-[#4a5a78]"></i></span>
      <span class="w-[33.5px] flex justify-center gap-[3px] items-center"><i class="w-px h-[6px] bg-[#4a5a78]"></i><span class="w-[13px] text-center">38</span><i class="w-px h-[6px] bg-[#4a5a78]"></i></span>
      <span class="w-[33.5px] flex justify-center gap-[3px] items-center"><i class="w-px h-[6px] bg-[#4a5a78]"></i><span class="w-[13px] text-center">40</span><i class="w-px h-[6px] bg-[#4a5a78]"></i></span>
      <span class="w-[33.5px] flex justify-center gap-[3px] items-center"><i class="w-px h-[6px] bg-[#4a5a78]"></i><span class="w-[13px] text-center">42</span><i class="w-px h-[6px] bg-[#4a5a78]"></i></span>
    </div>
  </div>
  <svg class="absolute left-[719px] top-[4px]" width="11" height="21" viewBox="0 0 11 21"><path d="M1 1h9v3L5.500 9 1 4zM5.500 9L10 14H1z" fill="#dbe7f7" stroke="#5b7ba8"/><rect x="1" y="14" width="9" height="6" fill="#dbe7f7" stroke="#5b7ba8"/></svg>
  <svg class="absolute left-[1188px] top-[11px]" width="11" height="10" viewBox="0 0 11 10"><path d="M5.500 1L10 5v4H1V5z" fill="#dbe7f7" stroke="#5b7ba8"/></svg>
</div>

<!-- workspace -->
<main class="relative h-[619px] flex bg-linear-to-b from-[#9cbbe4] to-[#4f78ab] overflow-hidden">
  <svg class="absolute left-0 top-0" width="340" height="120" viewBox="0 0 340 120"><path d="M21 0H337C230 25 120 55 21 95z" fill="#fff" fill-opacity=".2"/><path d="M21 117C100 65 210 35 337 0" fill="none" stroke="#fff" stroke-opacity=".22"/></svg>
  <!-- vertical ruler -->
  <div class="relative z-[1] ml-[3px] w-[13px] h-full bg-[#b8cfec] overflow-hidden text-[10px] leading-none font-['Liberation_Sans'] text-[#4a5a78]">
    <div class="absolute left-0 top-[256px] w-full h-[71px] bg-white"></div>
    <div class="relative -mt-[9.4px] flex flex-col items-center">
      <span class="h-[24.8px] w-full flex items-center justify-center [writing-mode:vertical-rl] rotate-180">10</span><i class="w-[5px] h-px -mb-px bg-[#4a5a78]"></i>
      <span class="h-[24.8px] w-full flex items-center justify-center [writing-mode:vertical-rl] rotate-180">9</span><i class="w-[5px] h-px -mb-px bg-[#4a5a78]"></i>
      <span class="h-[24.8px] w-full flex items-center justify-center [writing-mode:vertical-rl] rotate-180">8</span><i class="w-[5px] h-px -mb-px bg-[#4a5a78]"></i>
      <span class="h-[24.8px] w-full flex items-center justify-center [writing-mode:vertical-rl] rotate-180">7</span><i class="w-[5px] h-px -mb-px bg-[#4a5a78]"></i>
      <span class="h-[24.8px] w-full flex items-center justify-center [writing-mode:vertical-rl] rotate-180">6</span><i class="w-[5px] h-px -mb-px bg-[#4a5a78]"></i>
      <span class="h-[24.8px] w-full flex items-center justify-center [writing-mode:vertical-rl] rotate-180">5</span><i class="w-[5px] h-px -mb-px bg-[#4a5a78]"></i>
      <span class="h-[24.8px] w-full flex items-center justify-center [writing-mode:vertical-rl] rotate-180">4</span><i class="w-[5px] h-px -mb-px bg-[#4a5a78]"></i>
      <span class="h-[24.8px] w-full flex items-center justify-center [writing-mode:vertical-rl] rotate-180">3</span><i class="w-[5px] h-px -mb-px bg-[#4a5a78]"></i>
      <span class="h-[24.8px] w-full flex items-center justify-center [writing-mode:vertical-rl] rotate-180">2</span><i class="w-[5px] h-px -mb-px bg-[#4a5a78]"></i>
      <span class="h-[24.8px] w-full flex items-center justify-center [writing-mode:vertical-rl] rotate-180">1</span><i class="w-[5px] h-px -mb-px bg-[#4a5a78]"></i>
      <span class="h-[24.8px] w-full"></span><i class="w-[5px] h-px -mb-px bg-[#4a5a78]"></i>
      <span class="h-[24.8px] w-full flex items-center justify-center [writing-mode:vertical-rl] rotate-180">1</span><i class="w-[5px] h-px -mb-px bg-[#4a5a78]"></i>
      <span class="h-[24.8px] w-full flex items-center justify-center [writing-mode:vertical-rl] rotate-180">2</span><i class="w-[5px] h-px -mb-px bg-[#4a5a78]"></i>
      <span class="h-[24.8px] w-full flex items-center justify-center [writing-mode:vertical-rl] rotate-180">3</span><i class="w-[5px] h-px -mb-px bg-[#4a5a78]"></i>
      <span class="h-[24.8px] w-full flex items-center justify-center [writing-mode:vertical-rl] rotate-180">4</span><i class="w-[5px] h-px -mb-px bg-[#4a5a78]"></i>
      <span class="h-[24.8px] w-full flex items-center justify-center [writing-mode:vertical-rl] rotate-180">5</span><i class="w-[5px] h-px -mb-px bg-[#4a5a78]"></i>
      <span class="h-[24.8px] w-full flex items-center justify-center [writing-mode:vertical-rl] rotate-180">6</span><i class="w-[5px] h-px -mb-px bg-[#4a5a78]"></i>
      <span class="h-[24.8px] w-full flex items-center justify-center [writing-mode:vertical-rl] rotate-180">7</span><i class="w-[5px] h-px -mb-px bg-[#4a5a78]"></i>
      <span class="h-[24.8px] w-full flex items-center justify-center [writing-mode:vertical-rl] rotate-180">8</span><i class="w-[5px] h-px -mb-px bg-[#4a5a78]"></i>
      <span class="h-[24.8px] w-full flex items-center justify-center [writing-mode:vertical-rl] rotate-180">9</span><i class="w-[5px] h-px -mb-px bg-[#4a5a78]"></i>
      <span class="h-[24.8px] w-full flex items-center justify-center [writing-mode:vertical-rl] rotate-180">10</span><i class="w-[5px] h-px -mb-px bg-[#4a5a78]"></i>
      <span class="h-[24.8px] w-full flex items-center justify-center [writing-mode:vertical-rl] rotate-180">11</span><i class="w-[5px] h-px -mb-px bg-[#4a5a78]"></i>
      <span class="h-[24.8px] w-full flex items-center justify-center [writing-mode:vertical-rl] rotate-180">12</span><i class="w-[5px] h-px -mb-px bg-[#4a5a78]"></i>
      <span class="h-[24.8px] w-full flex items-center justify-center [writing-mode:vertical-rl] rotate-180">13</span><i class="w-[5px] h-px -mb-px bg-[#4a5a78]"></i>
      <span class="h-[24.8px] w-full flex items-center justify-center [writing-mode:vertical-rl] rotate-180">14</span>
    </div>
  </div>
  <div class="w-[5px] h-full bg-white/15"></div>
  <!-- page -->
  <article class="relative ml-[464px] w-[951px] h-full bg-[#ccffcc] shadow-[-1px_0_0_#56657a,1px_0_1px_#56657a] text-[#333]">
    <div class="absolute left-[475px] top-[36px] text-[10px] text-[#888] leading-none">↵</div>
    <h1 class="pt-[86px] pl-[254px] whitespace-nowrap font-normal text-[42.5px] leading-[56px] font-['Noto_Sans_CJK_SC']"><span class="inline-block w-[101px] font-['Liberation_Serif'] tracking-[0.5px] text-[42px]">word</span><span class="font-light">怎么画图添加文字</span><span class="text-[10px] text-[#888]">↵</span></h1>
    <!-- drawing canvas -->
    <div class="absolute left-[143px] top-[158px] w-[664px] h-[388px] border border-dashed border-[#5b8fe0]">
      <i class="absolute left-[1px] top-[1px] w-[15px] h-[16px] border-l-[3px] border-t-[3px] border-black"></i>
      <i class="absolute right-[1px] top-[1px] w-[15px] h-[16px] border-r-[3px] border-t-[3px] border-black"></i>
      <i class="absolute left-[1px] bottom-[1px] w-[15px] h-[16px] border-l-[3px] border-b-[3px] border-black"></i>
      <i class="absolute right-[1px] bottom-[1px] w-[15px] h-[16px] border-r-[3px] border-b-[3px] border-black"></i>
      <i class="absolute left-[323px] top-[1px] w-[15px] h-[3px] bg-black"></i>
      <i class="absolute left-[323px] bottom-[1px] w-[15px] h-[3px] bg-black"></i>
      <i class="absolute left-[1px] top-[185px] w-[3px] h-[15px] bg-black"></i>
      <i class="absolute right-[1px] top-[185px] w-[3px] h-[15px] bg-black"></i>
      <!-- text box -->
      <div class="absolute left-[80px] top-[86px] w-[502px] h-[92px] border border-dashed border-[#5b8fe0]"></div>
      <div class="absolute left-[83px] top-[87px] w-[496px] h-[89px] bg-white border border-black flex items-center whitespace-nowrap pl-[25px] pb-[5px] text-[42.5px] font-['Noto_Sans_CJK_SC']"><span class="w-[101px] font-['Liberation_Serif'] tracking-[0.5px] text-[42px]">word</span><span class="font-light">怎么画图添加文字</span><span class="ml-[2px] mt-[5px] w-[2px] h-[54px] bg-black"></span><span class="ml-[1px] mt-[4px] text-[9px] leading-none text-[#999]">↵</span></div>
      <i class="absolute left-[330px] top-[68px] w-px h-[18px] bg-[#6a7fa8]"></i>
      <i class="absolute left-[327px] top-[61px] w-[7px] h-[7px] rounded-full bg-[#22dd22] border border-[#2a8a2a]"></i>
      <i class="absolute left-[77px] top-[80px] w-[7px] h-[7px] rounded-full bg-[#5b8fe0] border border-[#3a66b0]"></i>
      <i class="absolute left-[579px] top-[80px] w-[7px] h-[7px] rounded-full bg-[#5b8fe0] border border-[#3a66b0]"></i>
      <i class="absolute left-[77px] top-[175px] w-[7px] h-[7px] rounded-full bg-[#5b8fe0] border border-[#3a66b0]"></i>
      <i class="absolute left-[579px] top-[175px] w-[7px] h-[7px] rounded-full bg-[#5b8fe0] border border-[#3a66b0]"></i>
      <i class="absolute left-[328px] top-[80px] w-[7px] h-[7px] bg-[#5b8fe0] border border-[#3a66b0]"></i>
      <i class="absolute left-[328px] top-[175px] w-[7px] h-[7px] bg-[#5b8fe0] border border-[#3a66b0]"></i>
      <i class="absolute left-[77px] top-[128px] w-[7px] h-[7px] bg-[#5b8fe0] border border-[#3a66b0]"></i>
      <i class="absolute left-[579px] top-[128px] w-[7px] h-[7px] bg-[#5b8fe0] border border-[#3a66b0]"></i>
      <svg class="absolute left-[310px] top-[183px]" width="42" height="116" viewBox="0 0 42 116"><path d="M21 2L40 57H31V113H11V57H2Z" fill="none" stroke="#ee1122" stroke-width="2.500"/></svg>
      <span class="absolute left-[662px] bottom-[0px] text-[10px] text-[#888] leading-none">↵</span>
    </div>
    <div class="absolute left-[144px] top-[579px] text-[10px] text-[#888] leading-none">↵</div>
  </article>
</main>
</body></html>
